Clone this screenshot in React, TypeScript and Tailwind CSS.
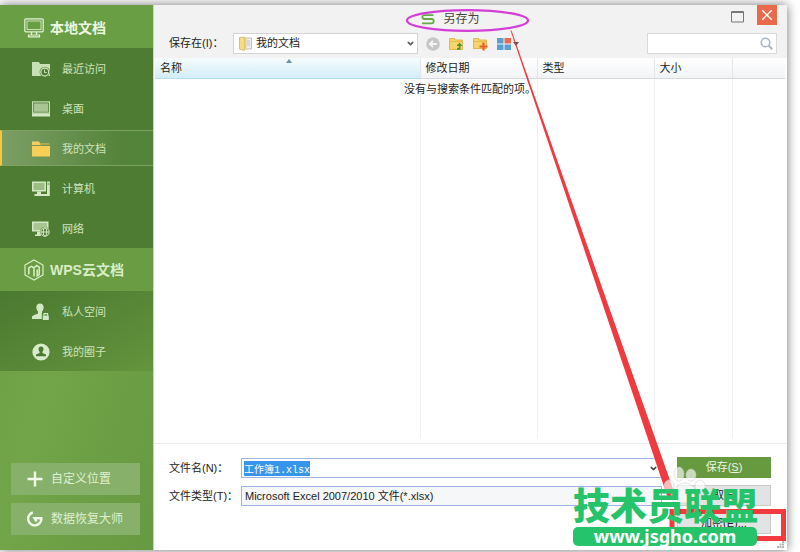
import React, { useEffect, useRef, useState } from 'react';
import { ChevronDown } from 'lucide-react';

const MonitorIcon = () => (
    <svg width="20" height="20" viewBox="0 0 20 20" fill="none" stroke="#e3f3d2" strokeWidth="1.2">
        <rect x="0.8" y="0.8" width="18.4" height="13" rx="1" />
        <rect x="3" y="3" width="14" height="8.6" strokeWidth="0.8" />
        <path d="M7.5 14v3M12.5 14v3M4.5 18.8v-1.800h11v1.800z" />
    </svg>
);

const CloudIcon = () => (
    <svg width="20" height="22" viewBox="0 0 20 22" fill="none" stroke="#dcefc9" strokeWidth="1.2">
        <path d="M10 1l9 5v10l-9 5-9-5V6z" />
        <path d="M4.800 15.500V8.800L7.300 7.300 10 8.800V17.500M10 8.800L12.700 6.500 15.200 8.200V15.500l-2 1.300V10.500" strokeWidth="1.500" />
    </svg>
);

const RecentIcon = () => (
    <svg width="18" height="16" viewBox="0 0 18 16">
        <path d="M0 1h7l1 2h10v12H0z" fill="#c9e0b6" />
        <circle cx="12.800" cy="11" r="5.200" fill="#4f7c33" />
        <circle cx="12.800" cy="11" r="4" fill="none" stroke="#c9e0b6" strokeWidth="1.300" />
        <path d="M12.500 8.500v3h2.200" fill="none" stroke="#c9e0b6" />
    </svg>
);

const DesktopIcon = () => (
    <svg width="18" height="16" viewBox="0 0 18 16">
        <rect x="0.600" y="0.900" width="16.800" height="11.200" fill="none" stroke="#c9e0b6" strokeWidth="1.200" />
        <rect x="2" y="2.400" width="14" height="8.400" fill="#a9c594" />
        <path d="M0 12.500h18v3H0z" fill="#d5e8c5" />
    </svg>
);

const FolderIcon = () => (
    <svg width="18" height="16" viewBox="0 0 18 16">
        <path d="M0 0.500h7l1 2h9.500v1.500H0z" fill="#f2cf63" />
        <path d="M0 5h18v10.500H0z" fill="#f7ce56" />
        <path d="M0 4.500h8l1-1.200h9" fill="none" stroke="#8f8a3d" strokeWidth="0.800" />
    </svg>
);

const ComputerIcon = () => (
    <svg width="18" height="16" viewBox="0 0 18 16" fill="#d5e8c5">
        <path d="M0 0.500h14v10H0z" />
        <path d="M1.500 2h11v7h-11z" fill="#9dbd86" />
        <path d="M5 10.500h4v2.500h3v2H2.500v-2H5z" />
        <path d="M15 0.500h2.800V15H12v-2h3z" />
        <path d="M15.500 3h1.800" stroke="#4f7c33" />
    </svg>
);

const NetworkIcon = () => (
    <svg width="18" height="16" viewBox="0 0 18 16">
        <path d="M0 0.500h16.500v10H0z" fill="#d5e8c5" />
        <path d="M1.500 2h13.500v7H1.500z" fill="#a9c594" />
        <path d="M5 10.500h4v4.500H3v-1.500h2z" fill="#d5e8c5" />
        <circle cx="13" cy="11" r="5" fill="#4f7c33" />
        <g fill="none" stroke="#d5e8c5" strokeWidth="1">
            <circle cx="13" cy="11" r="4.200" />
            <ellipse cx="13" cy="11" rx="1.800" ry="4.200" />
            <path d="M9 11h8" />
        </g>
    </svg>
);

const PrivateIcon = () => (
    <svg width="18" height="18" viewBox="0 0 18 18">
        <path d="M8 0.500c2.500 0 3.800 1.700 3.600 4.200-.1 2-.9 3-1.600 3.800v2l2 1V16H0v-2.500c1.500-1.500 4-2 6-3v-2C5.200 7.700 4.500 6.500 4.400 4.700 4.200 2.200 5.500.5 8 .5z" fill="#d5e8c5" />
        <path d="M9.800 10H18v8H9.800z" fill="#4f8035" />
        <rect x="10.800" y="12.500" width="6" height="4.500" fill="#d5e8c5" />
        <path d="M12 12.500v-1.800h3.600v1.800" fill="none" stroke="#d5e8c5" strokeWidth="1.200" />
    </svg>
);

const CircleIcon = () => (
    <svg width="18" height="18" viewBox="0 0 18 18">
        <circle cx="9" cy="9" r="8.600" fill="#d9ebca" />
        <path d="M9 3.500c1.700 0 2.600 1.200 2.500 2.700-.1 1.300-.6 2-1.100 2.500v1.200l3.600 1.600v1.700H4v-1.700l3.600-1.600V8.700c-.5-.5-1-1.200-1.100-2.500C6.400 4.700 7.300 3.500 9 3.500z" fill="#4b7b33" />
    </svg>
);

const localItems = [
    { label: '最近访问', icon: <RecentIcon /> },
    { label: '桌面', icon: <DesktopIcon /> },
    { label: '我的文档', icon: <FolderIcon /> },
    { label: '计算机', icon: <ComputerIcon /> },
    { label: '网络', icon: <NetworkIcon /> },
];

const cloudItems = [
    { label: '私人空间', icon: <PrivateIcon /> },
    { label: '我的圈子', icon: <CircleIcon /> },
];

interface NavItemProps {
    label: string;
    icon: React.ReactNode;
    active: boolean;
    onClick: () => void;
}

const NavItem: React.FC<NavItemProps> = ({ label, icon, active, onClick }) => (
    <li className="flex h-10 items-center">
        <button
            onClick={onClick}
            className={`flex h-9 w-full items-center gap-3 border-y border-l-2 pt-[2px] pl-[30px] text-[11px] text-[#cfe3bd] ${
                active
                    ? 'border-y-[#7da163] border-l-[#f5c843] bg-linear-to-r from-[#7c9f64] to-[#54833a] to-80%'
                    : 'border-transparent'
            }`}
        >
            <span className="flex w-[18px] justify-center">{icon}</span>
            <span>{label}</span>
        </button>
    </li>
);

const Sidebar: React.FC = () => {
    const [active, setActive] = useState('我的文档');

    return (
        <nav className="flex w-[154px] shrink-0 flex-col border-r border-[#c6dbb6] bg-linear-to-br from-[#689b42] via-[#72a449] to-[#669941]">
            <h2 className="flex h-[43px] items-center gap-[6px] bg-[#6a9e45] pt-[2px] pl-6 text-sm font-bold text-[#edf8e2]">
                <MonitorIcon />
                本地文档
            </h2>
            <ul className="bg-[#4f7c33]">
                {localItems.map(item => (
                    <NavItem key={item.label} {...item} active={active === item.label} onClick={() => setActive(item.label)} />
                ))}
            </ul>
            <h2 className="flex h-[43px] items-center gap-[6px] bg-[#699c43] pl-6 text-sm font-bold text-[#d9edc7]">
                <CloudIcon />
                WPS云文档
            </h2>
            <ul className="bg-linear-to-br from-[#4a7931] to-[#64943c]">
                {cloudItems.map(item => (
                    <NavItem key={item.label} {...item} active={active === item.label} onClick={() => setActive(item.label)} />
                ))}
            </ul>
            <div className="mt-auto flex flex-col gap-2 pr-[13px] pb-[15px] pl-[11px] text-xs text-[#dff0d0]">
                <button className="flex h-8 items-center gap-2 bg-[#87b06a] pl-4">
                    <svg width="16" height="16" viewBox="0 0 16 16" stroke="#f1faea" strokeWidth="2.400">
                        <path d="M8 0.500v15M0.500 8h15" />
                    </svg>
                    自定义位置
                </button>
                <button className="flex h-8 items-center gap-2 bg-[#87b06a] pl-4">
                    <svg width="16" height="16" viewBox="0 0 16 16" fill="none" stroke="#f1faea" strokeWidth="2.400">
                        <path d="M5.800 1.500A6.600 6.600 0 1 0 14.300 7.200H7.500L9.500 10.500" />
                    </svg>
                    数据恢复大师
                </button>
            </div>
        </nav>
    );
};

const TitleBar: React.FC = () => (
    <header className="flex h-7 items-start pr-[10px]">
        <h1 className="flex h-7 flex-1 items-center justify-center gap-2 pl-4 text-xs text-[#444]">
            <svg width="14" height="11" viewBox="0 0 14 11" fill="none" stroke="#63ab45" strokeWidth="1.800">
                <path d="M12.500 1.200H3.500C.6 1.200.6 5 3.500 5h7c2.900 0 2.900 4.300 0 4.300H1" />
            </svg>
            另存为
        </h1>
        <button aria-label="最大化" className="mt-[6px] mr-[13px]">
            <svg width="13" height="12" viewBox="0 0 13 12" fill="none" stroke="#777">
                <path d="M0.500 0.500h12v10.500H0.500z" />
                <path d="M0.500 1.500h12" />
            </svg>
        </button>
        <button aria-label="关闭" className="flex h-5 w-5 items-center justify-center bg-[#e9694b]">
            <svg width="10" height="10" viewBox="0 0 10 10" stroke="#fff" strokeWidth="1.400">
                <path d="M0 0l10 10M10 0L0 10" />
            </svg>
        </button>
    </header>
);

const Toolbar: React.FC = () => (
    <div className="flex h-[25px] items-start pl-[15px] pr-[10px]">
        <label htmlFor="location" className="w-16 leading-[21px]">保存在(I)：</label>
        <div className="relative">
            <select id="location" className="h-[21px] w-[185px] appearance-none border border-[#d4d4d4] bg-white pl-[22px]">
                <option>我的文档</option>
            </select>
            <svg className="pointer-events-none absolute top-[3px] left-[6px]" width="13" height="15" viewBox="0 0 13 15">
                <path d="M5 2h7.500v11H5z" fill="#e9eef2" stroke="#a8b4bd" strokeWidth="0.800" />
                <path d="M8 5h3M8 7h3M8 9h3" stroke="#9db9d8" strokeWidth="0.800" />
                <path d="M0.500 1.500L5.500 1v13.500l-5-1.500z" fill="#f5dc83" stroke="#d5b45a" strokeWidth="0.800" />
                <path d="M5.500 2.500h2v10.500h-2z" fill="#ecd07a" />
            </svg>
            <ChevronDown className="pointer-events-none absolute top-[6px] right-[3px] text-[#555]" size={9} strokeWidth={4} />
        </div>
        <div className="ml-2 flex h-[21px] items-center gap-[9px]">
            <button aria-label="后退">
                <svg width="14" height="14" viewBox="0 0 14 14">
                    <circle cx="7" cy="7" r="6.800" fill="#c6c6c6" />
                    <path d="M11 7H4M7 3.800L3.800 7 7 10.200" fill="none" stroke="#f5f5f5" strokeWidth="1.800" />
                </svg>
            </button>
            <button aria-label="向上一级">
                <svg width="15" height="14" viewBox="0 0 15 14">
                    <path d="M0.500 1.500h5l1 1.500h7v9.500h-13z" fill="#f9d46a" stroke="#e0b244" strokeWidth="0.900" />
                    <path d="M1 4.500h12" stroke="#e6bb50" />
                    <path d="M10.500 5.500l3 3.500h-2v3.800H8v-1.800h1.700V9H7.500z" fill="#4c9a2c" />
                </svg>
            </button>
            <button aria-label="新建文件夹">
                <svg width="15" height="14" viewBox="0 0 15 14">
                    <path d="M0.500 1.500h5l1 1.500h7v8.500h-13z" fill="#f9d46a" stroke="#e0b244" strokeWidth="0.900" />
                    <path d="M1 4.500h12" stroke="#e6bb50" />
                    <path d="M10.500 5.500v8M6.500 9.500h8" stroke="#e5602a" strokeWidth="2.200" />
                </svg>
            </button>
            <button aria-label="视图" className="flex items-center gap-[2px]">
                <svg width="14" height="12" viewBox="0 0 14 12">
                    <path d="M0 0h6.500v5.500H0zM0 6.500h6.500V12H0zM7.500 6.500H14V12H7.500z" fill="#5b9fd0" />
                    <path d="M7.500 0H14v5.500H7.500z" fill="#e8694d" />
                </svg>
                <svg width="6" height="4" viewBox="0 0 6 4" fill="#555">
                    <path d="M0 0h6L3 4z" />
                </svg>
            </button>
        </div>
        <div className="relative ml-auto">
            <input type="search" aria-label="搜索" className="block h-[21px] w-[130px] border border-[#d9d9d9] bg-white pr-5 pl-1" />
            <svg className="absolute top-1 right-1" width="13" height="13" viewBox="0 0 13 13" fill="none" stroke="#a9b7c4" strokeWidth="1.600">
                <circle cx="5.500" cy="5.500" r="4.300" />
                <path d="M8.800 8.800l3.400 3.400" strokeWidth="2" />
            </svg>
        </div>
    </div>
);

const columns = [
    { label: '名称', width: '' },
    { label: '修改日期', width: 'w-[117px]' },
    { label: '类型', width: 'w-[117px]' },
    { label: '大小', width: 'w-[78px]' },
    { label: '', width: 'w-[53px]' },
];

const FileList: React.FC = () => (
    <div className="relative mr-[2px] mb-[5px] ml-px min-h-0 flex-1">
        <table className="h-full w-full table-fixed">
            <thead>
                <tr className="h-5 text-left">
                    {columns.map((col, i) => (
                        <th
                            key={i}
                            scope="col"
                            className={`border-b pt-[2px] pl-[5px] font-normal leading-[17px] ${col.width} ${
                                i === 0
                                    ? 'border-[#b5dfee] bg-linear-to-b from-[#f6fcfe] to-[#d3edf7]'
                                    : 'border-l border-b-[#d5d9dd] border-l-[#e4e7ea] bg-linear-to-b from-white to-[#f1f3f5]'
                            }`}
                        >
                            {col.label}
                        </th>
                    ))}
                </tr>
            </thead>
            <tbody>
                <tr>
                    {columns.map((_, i) => (
                        <td key={i} className={i === 0 ? '' : 'border-l border-[#f0f0f0]'} />
                    ))}
                </tr>
            </tbody>
        </table>
        <svg className="absolute top-px left-[131px]" width="6" height="4" viewBox="0 0 6 4" fill="#6a8fa8">
            <path d="M3 0l3 4H0z" />
        </svg>
        <p className="absolute inset-x-0 top-[23px] text-center leading-4">没有与搜索条件匹配的项。</p>
    </div>
);

const SaveForm: React.FC = () => {
    const [fileName, setFileName] = useState('工作簿1.xlsx');
    const nameRef = useRef<HTMLInputElement>(null);

    useEffect(() => {
        if (nameRef.current) {
            nameRef.current.focus();
            nameRef.current.select();
        }
    }, []);

    return (
        <form
            onSubmit={e => e.preventDefault()}
            className="relative flex gap-[15px] border-t border-[#ececec] bg-white pt-[13px] pr-4 pb-4 pl-[15px]"
        >
            <div className="flex flex-1 flex-col gap-2 pt-px">
                <div className="flex items-center">
                    <label htmlFor="filename" className="w-[72px] leading-5">文件名(N)：</label>
                    <div className="relative flex-1">
                        <input
                            id="filename"
                            ref={nameRef}
                            value={fileName}
                            onChange={e => setFileName(e.target.value)}
                            className="block h-5 w-full border border-[#9db4e3] bg-white pl-[2px] font-['Liberation_Mono','Noto_Sans_CJK_SC',monospace] text-[10px] outline-none selection:bg-[#3796ea] selection:text-white"
                        />
                        <ChevronDown className="pointer-events-none absolute top-[6px] right-1 text-[#444]" size={9} strokeWidth={4} />
                    </div>
                </div>
                <div className="flex items-center">
                    <label htmlFor="filetype" className="w-[72px] leading-5">文件类型(T)：</label>
                    <select id="filetype" className="h-5 flex-1 appearance-none border border-[#9db4e3] bg-[#f6f7f8] pl-[3px]">
                        <option>Microsoft Excel 2007/2010 文件(*.xlsx)</option>
                    </select>
                </div>
            </div>
            <div className="flex w-[94px] flex-col gap-[7px]">
                <button type="submit" className="h-[21px] bg-[#67993e] text-[#eef7e6]">
                    保存(<u>S</u>)
                </button>
                <button type="button" className="h-[21px] border border-[#c9cbcd] bg-[#e1e3e4]">取消</button>
                <button type="button" className="h-[21px] border border-[#c9cbcd] bg-[#e1e3e4]">加密(E)...</button>
            </div>
            <svg className="absolute right-[3px] bottom-[2px]" width="7" height="7" viewBox="0 0 7 7" fill="#b5b5b5">
                <path d="M5 0h2v2H5zM5 2.500h2v2H5zM2.500 2.500h2v2h-2zM5 5h2v2H5zM2.500 5h2v2h-2zM0 5h2v2H0z" />
            </svg>
        </form>
    );
};

const Annotations: React.FC = () => (
    <div className="pointer-events-none absolute inset-0">
        <svg className="absolute inset-0 h-full w-full" viewBox="0 0 800 552" fill="none">
            <ellipse cx="467.500" cy="20.500" rx="60.500" ry="10.300" stroke="#d33fd6" strokeWidth="2.300" />
            <path d="M510.500 30.500L511.500 30.500 674.500 493 675 500 668.500 500z" fill="#ee3b40" />
            <path d="M672 511.500h111.500v27H672z" stroke="#f23a3f" strokeWidth="5" />
            <g fill="#fff" fillOpacity="0.650" stroke="#ccc" strokeOpacity="0.500">
                <ellipse cx="679" cy="474" rx="5" ry="7" />
                <ellipse cx="691" cy="475" rx="5" ry="6" />
                <ellipse cx="669" cy="486" rx="5" ry="6" />
                <ellipse cx="700" cy="486" rx="5" ry="6" />
                <path d="M685 483c7 0 13 8 13 14s-6 6-13 6-14 0-14-6 7-14 14-14z" />
            </g>
        </svg>
        <div className="absolute right-[43px] bottom-[6px] w-[184px] text-center">
            <p className="pb-[3px] font-['Noto_Sans_CJK_SC',sans-serif] text-[37px] leading-10 font-black whitespace-nowrap text-[#25c36a]">技术员联盟</p>
            <p className="rounded-[5px] bg-[#25c36a] font-['Noto_Sans',sans-serif] text-[18px] leading-[19px] font-bold text-white">www.jsgho.com</p>
        </div>
    </div>
);

const App: React.FC = () => {
    return (
        <div className="relative flex h-screen min-h-[500px] overflow-hidden bg-white pt-[5px] pr-[13px] pb-[2px] font-['Liberation_Sans','Noto_Sans_CJK_SC',sans-serif] text-[11px] text-[#222]">
            <div className="flex flex-1 bg-white shadow-[0_0_10px_rgba(0,0,0,0.55)]">
                <Sidebar />
                <main className="flex min-w-0 flex-1 flex-col">
                    <div className="bg-[#f2f2f2]">
                        <TitleBar />
                        <Toolbar />
                    </div>
                    <FileList />
                    <SaveForm />
                </main>
            </div>
            <Annotations />
        </div>
    );
};

export default App;
